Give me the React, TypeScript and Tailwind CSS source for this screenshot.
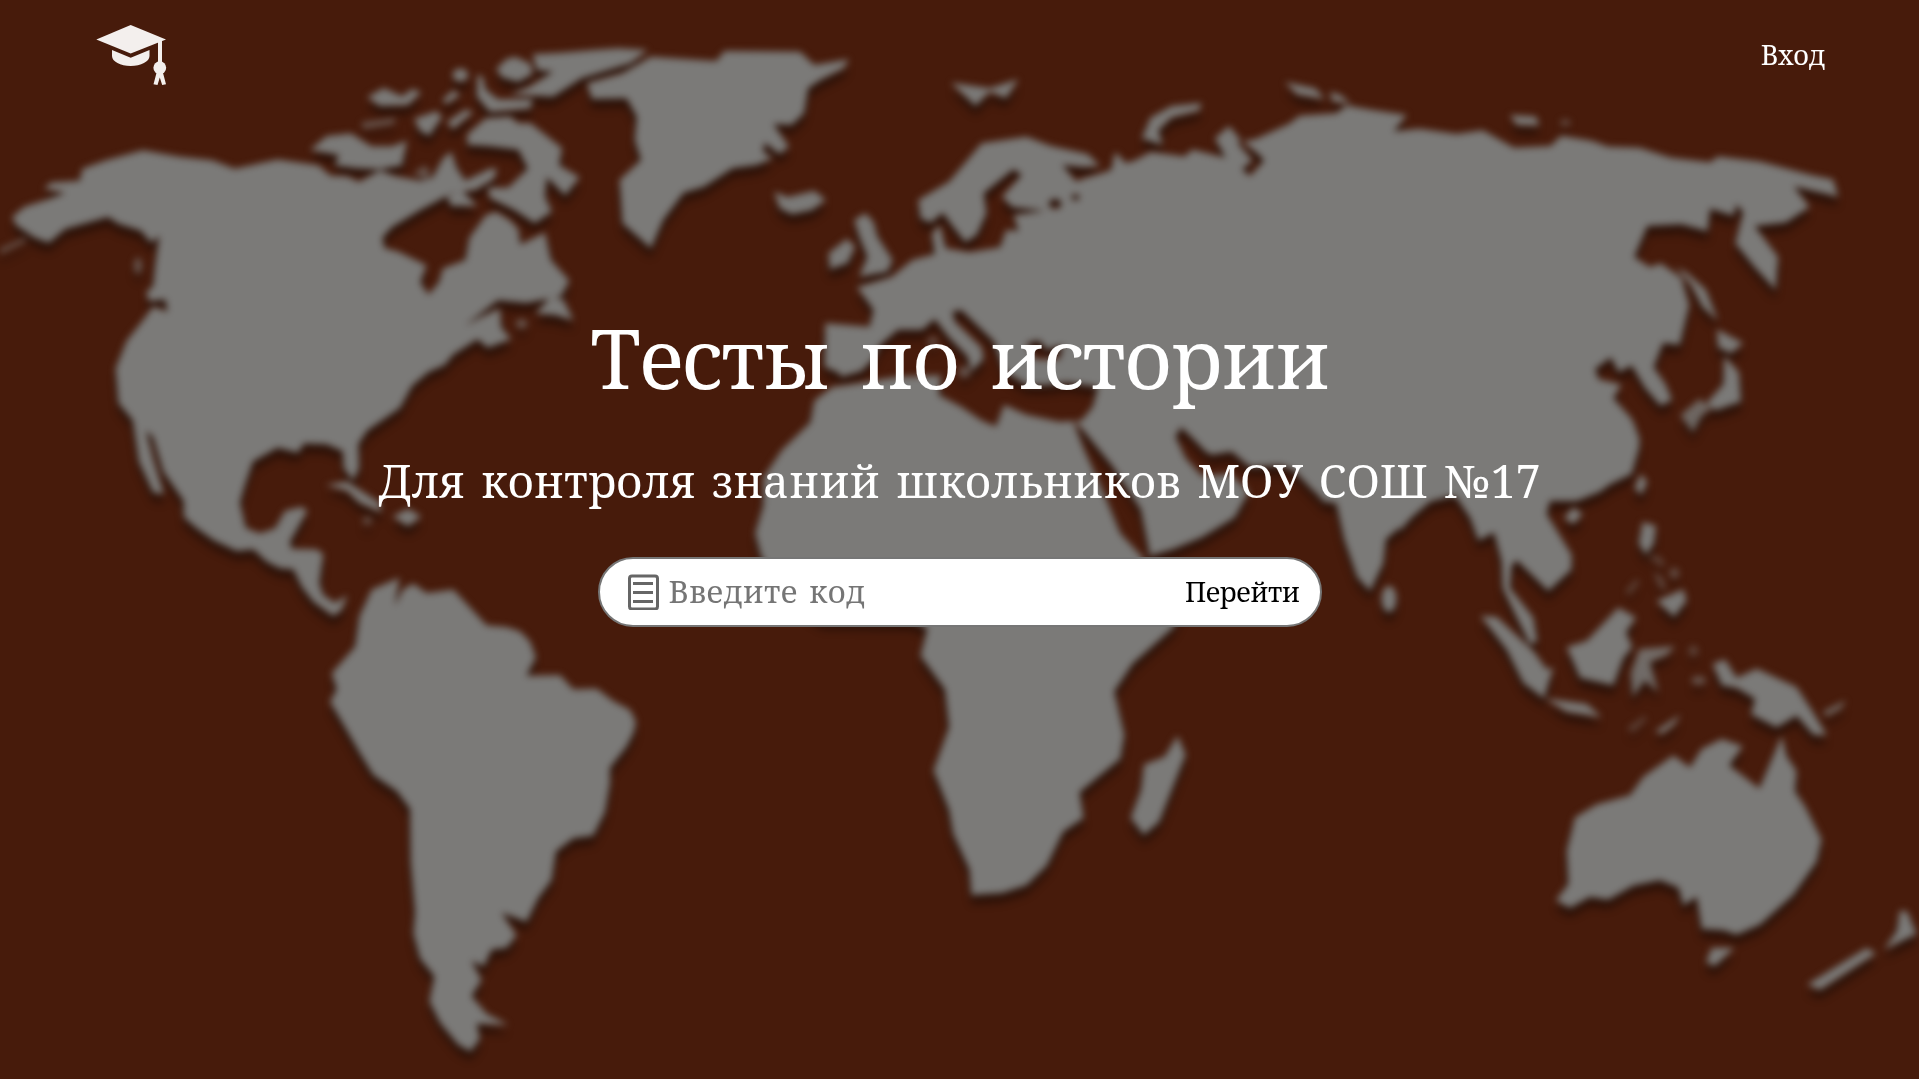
const crop = {
  northAmerica: "matrix(.40816 0 0 .34439 0 0)",
  atlantic: "matrix(.40816 0 0 .33333 500 0)",
  asia: "matrix(.52296 0 0 .34439 1080 40)",
  southAmerica: "matrix(.33333 0 0 .35651 300 520)",
  africa: "matrix(.40816 0 0 .39541 700 300)",
  oceania: "matrix(.33333 0 0 .3699 1400 440)",
  centralAmerica: "matrix(.33333 0 0 .33333 160 480)",
};

function WorldMap() {
  return (
    <svg
      className="absolute inset-0 h-full w-full"
      viewBox="0 0 1919 1079"
      preserveAspectRatio="none"
      aria-hidden="true"
    >
      <defs>
        <filter
          id="relief"
          filterUnits="userSpaceOnUse"
          x="-20"
          y="-20"
          width="1960"
          height="1120"
          colorInterpolationFilters="sRGB"
        >
          <feGaussianBlur in="SourceGraphic" stdDeviation="3.8" result="land" />
          <feOffset in="SourceAlpha" dx="0" dy="9" result="shifted" />
          <feGaussianBlur in="shifted" stdDeviation="5" result="soft" />
          <feComponentTransfer in="soft" result="shadow">
            <feFuncA type="linear" slope=".42" />
          </feComponentTransfer>
          <feFlood floodColor="#000" result="black" />
          <feComposite in="black" in2="shadow" operator="in" result="dark" />
          <feMerge>
            <feMergeNode in="dark" />
            <feMergeNode in="land" />
          </feMerge>
        </filter>
        <mask id="seas" maskUnits="userSpaceOnUse" x="0" y="0" width="1919" height="1079">
          <rect width="1919" height="1079" fill="#fff" />
          <g fill="#000">
            <g transform={crop.africa}>
              <path d="M270 188L300 190L345 195L395 180L425 150L440 115L485 75L545 75L575 48L610 95L655 142L665 180L695 150L690 120L625 55L618 30L640 25L720 105L745 180L800 215L850 215L900 208L975 220L962 270L935 305L880 308L800 290L745 265L725 320L690 305L640 270L585 240L590 190L480 195L380 212L325 220Z" />
              <path d="M800 110L830 102L850 125L890 115L880 150L820 150Z" />
              <path d="M912 300L935 325L1010 420L1080 530L1102 645L1085 652L1030 590L990 490L940 375Z" />
            </g>
            <path transform={crop.asia} d="M308 290L340 330L352 350L325 395L310 375L330 350L302 300Z" />
            <g transform={crop.atlantic}>
              <circle cx="1360" cy="612" r="15" />
              <circle cx="1410" cy="592" r="9" />
            </g>
          </g>
        </mask>
      </defs>
      <g filter="url(#relief)" fill="#7b7a78">
        <g transform={crop.northAmerica}>
          <path d="M30 630L60 600L120 578L160 560L108 548L125 530L195 525L202 490L260 465L350 436L440 455L520 465L575 490L680 463L780 480L810 510L850 512L880 528L930 495L970 512L1030 525L1060 515L1085 460L1105 440L1120 490L1140 525L1200 490L1218 490L1210 520L1165 552L1110 560L1030 610L960 660L937 690L942 720L975 730L1045 770L1030 820L1050 855L1075 820L1085 780L1140 755L1150 690L1190 625L1215 615L1250 640L1270 665L1275 710L1335 675L1350 755L1395 815L1375 860L1290 880L1220 872L1140 945L1180 920L1225 895L1228 950L1252 985L1195 1010L1170 985L1110 1030L1090 1060L1050 1080L1010 1120L980 1185L900 1250L878 1290L880 1360L865 1395L842 1360L840 1310L800 1290L745 1288L730 1315L680 1300L620 1340L600 1410L588 1460L600 1520L500 1540L450 1500L450 1455L400 1370L375 1270L358 1250L375 1330L402 1435L375 1430L340 1340L325 1220L290 1170L283 1070L310 990L350 930L375 890L410 905L405 870L365 875L358 850L375 830L380 770L390 685L370 705L345 670L290 650L265 630L160 665L120 705L85 690L40 655Z" />
          <path d="M0 722L60 690L66 700L0 738Z" opacity=".6" />
          <path d="M760 435L800 395L860 387L910 425L960 425L997 408L985 480L930 492L870 488L820 480L830 450Z" />
          <path d="M900 282L940 255L985 280L1010 258L1032 268L1000 305L930 308Z" />
          <path d="M885 355L970 342L965 360L890 375Z" opacity=".6" />
          <path d="M1015 345L1070 322L1083 340L1052 394L1028 380Z" />
          <path d="M1095 355L1140 318L1160 325L1110 375Z" />
          <path d="M1083 292L1110 262L1128 275L1095 302Z" />
          <circle cx="1128" cy="218" r="19" />
          <path d="M1170 215L1183 225L1190 260L1220 288L1305 288L1300 315L1200 325L1168 280Z" />
          <path d="M1216 200L1240 172L1262 165L1300 185L1305 215L1270 238L1230 225Z" />
          <path d="M1145 390L1190 343L1250 338L1270 358L1300 358L1377 430L1370 480L1420 515L1385 568L1340 515L1335 570L1352 615L1310 648L1260 610L1200 575L1195 545L1245 545L1293 490L1270 435L1200 425L1145 420Z" />
          <path d="M1095 570L1130 552L1170 598L1105 598Z" />
          <path d="M1012 505L1040 480L1055 500L1045 520Z" opacity=".6" />
          <path d="M1312 910L1350 862L1380 870L1405 930L1360 915Z" />
          <circle cx="1278" cy="940" r="14" opacity=".6" />
          <ellipse cx="338" cy="772" rx="10" ry="24" opacity=".6" />
          <path d="M798 1408L850 1398L930 1460L935 1488L880 1460L850 1425Z" />
          <path d="M962 1500L1000 1477L1032 1500L1000 1528Z" />
          <circle cx="900" cy="1512" r="12" opacity=".5" />
        </g>
        <path
          transform={crop.centralAmerica}
          d="M35 -30L75 60L75 115L110 145L160 180L230 213L280 208L320 245L360 265L400 268L425 320L460 365L520 408L545 390L562 345L525 368L490 345L478 310L490 222L470 208L395 206L390 185L410 150L442 92L425 80L375 92L345 145L300 160L260 145L240 105L232 60L250 -10Z"
        />
        <g transform={crop.atlantic}>
          <path d="M80 163L150 158L230 150L290 145L362 150L320 190L200 235L130 290L25 282L70 262L130 215L90 210Z" />
          <path d="M213 250L300 220L370 170L530 183L550 153L735 155L770 195L855 178L842 205L785 240L755 265L745 340L715 375L670 372L708 440L685 462L648 428L645 455L668 475L630 495L570 505L500 560L450 578L400 660L370 745L300 670L293 540L345 480L330 420L335 350L310 295L225 297Z" />
          <path d="M672 575L705 592L770 572L798 600L765 630L715 643L685 625Z" />
          <path d="M1105 248L1200 265L1270 238L1240 295L1200 275L1165 318Z" />
          <path d="M868 660L895 640L915 665L925 710L962 780L950 815L880 830L900 770L880 710Z" />
          <path d="M805 760L850 716L870 740L852 790L808 808Z" />
        </g>
        <g mask="url(#seas)">
          <g transform={crop.atlantic}>
            <path d="M1025 600L1100 545L1180 430L1290 410L1350 438L1440 462L1470 498L1430 502L1378 495L1410 542L1450 542L1498 508L1505 465L1530 490L1568 478L1568 1200L850 1200L832 1120L795 1100L797 970L905 980L915 930L875 862L960 830L1010 780L1065 762L1058 700L1078 675L1092 745L1150 757L1225 742L1240 690L1270 692L1258 645L1335 632L1255 622L1230 590L1278 525L1258 508L1185 580L1192 640L1168 705L1140 727L1110 680L1085 638L1055 668L1030 655Z" />
          </g>
          <g transform={crop.africa}>
            <path d="M330 215L280 255L270 310L200 380L155 450L155 520L135 590L150 650L220 760L300 810L520 812L557 830L540 900L600 985L610 1080L572 1190L610 1290L620 1350L660 1440L665 1505L740 1500L800 1480L850 1430L890 1345L940 1310L930 1245L1030 1160L1040 1100L1015 990L1060 920L1160 828L1220 700L1080 690L1085 652L1100 648L1160 630L1230 600L1310 550L1345 485L1300 440L1230 445L1190 400L1165 345L1180 320L1240 385L1300 380L1345 420L1440 415L1500 480L1530 507L1568 500L1568 -60L1000 -60L1000 180L700 200Z" />
          </g>
          <g transform={crop.asia}>
            <path d="M0 405L60 378L68 325L90 362L135 325L200 338L215 318L278 342L258 285L285 250L310 295L335 288L400 243L420 220L490 213L510 190L560 203L625 218L600 265L650 258L720 273L770 262L830 313L900 308L920 278L980 293L1010 310L1070 313L1130 342L1205 355L1220 338L1300 353L1400 393L1440 405L1450 455L1365 425L1395 485L1350 530L1290 540L1335 630L1330 725L1290 660L1253 590L1268 500L1255 478L1250 510L1205 490L1200 555L1150 535L1085 540L1060 630L1090 660L1110 648L1150 690L1165 770L1147 885L1115 880L1097 950L1120 1000L1132 1045L1110 1062L1080 1010L1055 945L1030 965L1015 922L985 955L992 985L1035 1000L1020 1040L1055 1100L1070 1180L1055 1260L1000 1300L900 1330L740 1330L710 1325L670 1340L585 1450L580 1520L555 1600L530 1560L505 1450L490 1345L465 1340L425 1262L385 1235L325 1240L290 1195L250 1205L190 1120L0 1000Z" />
          </g>
          <g transform={crop.oceania}>
            <path d="M0 -50L0 245L80 162L165 150L210 210L235 272L282 250L305 330L308 400L350 480L390 552L412 545L400 480L330 400L335 340L350 325L445 408L515 350L515 310L440 200L450 165L530 165L600 140L660 100L705 45L720 0L700 -50Z" />
          </g>
        </g>
        <g transform={crop.africa}>
          <circle cx="570" cy="105" r="13" opacity=".5" />
          <circle cx="648" cy="182" r="15" opacity=".6" />
          <path d="M1170 1102L1190 1150L1125 1320L1087 1353L1055 1310L1080 1240L1088 1175L1138 1155Z" />
        </g>
        <g transform={crop.asia}>
          <path d="M118 285L135 225L175 192L232 183L228 205L175 225L150 262L158 305Z" />
          <path d="M392 122L450 140L468 172L415 158Z" />
          <path d="M478 150L498 160L518 185L482 178Z" />
          <path d="M822 218L872 222L878 248L835 247Z" />
          <circle cx="928" cy="240" r="10" opacity=".5" />
          <path d="M1140 660L1160 675L1197 725L1220 815L1190 775L1168 710Z" />
          <path d="M1218 840L1268 880L1245 910L1220 892Z" />
          <path d="M1232 918L1260 965L1264 1050L1215 1075L1198 1055L1230 1000Z" />
          <path d="M1148 1090L1185 1042L1208 1070L1190 1090L1172 1140Z" opacity=".8" />
        </g>
        <ellipse cx="1389" cy="599" rx="7.500" ry="13" />
        <g transform={crop.oceania}>
          <path d="M492 210L520 182L548 200L520 228Z" />
          <path d="M703 130L722 92L742 112L725 148Z" />
          <path d="M728 222L768 232L762 280L738 310L716 280Z" />
          <path d="M740 320L770 310L795 330L785 345L760 325Z" opacity=".4" />
          <circle cx="823" cy="360" r="15" opacity=".5" />
          <path d="M760 355L785 370L800 405L780 400Z" opacity=".5" />
          <path d="M770 435L850 403L860 435L822 478Z" />
          <path d="M675 410L710 375L718 385L690 418Z" opacity=".4" />
          <path d="M500 560L560 543L655 453L708 480L678 520L697 560L670 590L640 663L540 643Z" />
          <path d="M242 475L290 478L400 570L440 620L460 615L445 660L432 698L370 657L320 567Z" />
          <path d="M435 698L560 713L605 750L500 735Z" />
          <path d="M698 695L692 630L718 565L825 558L800 582L750 600L775 682L735 650Z" opacity=".85" />
          <circle cx="880" cy="570" r="15" opacity=".4" />
          <ellipse cx="896" cy="650" rx="22" ry="12" opacity=".6" />
          <path d="M766 788L842 742L822 770L785 795Z" />
          <path d="M680 780L735 745L740 755L700 790Z" opacity=".4" />
          <path d="M938 605L975 593L1010 643L1070 618L1190 668L1235 730L1280 798L1240 797L1190 745L1130 777L1053 742L1065 700L1010 670L965 663Z" />
          <path d="M1268 735L1338 703L1322 727L1280 747Z" opacity=".8" />
          <path d="M468 1245L505 1200L500 1110L525 1020L590 985L690 960L730 910L820 853L870 885L905 835L965 808L1028 828L988 880L1078 942L1145 800L1160 855L1190 895L1185 950L1215 990L1265 1080L1250 1140L1180 1230L1080 1310L1010 1337L970 1325L905 1322L890 1235L850 1258L835 1210L780 1190L700 1205L625 1243L570 1235L510 1265Z" />
          <path d="M918 1412L935 1373L1003 1373L945 1422Z" />
          <path d="M1222 1472L1400 1373L1428 1388L1260 1487Z" />
          <path d="M1452 1378L1490 1328L1500 1272L1522 1275L1550 1335Z" />
        </g>
        <path
          transform={crop.southAmerica}
          d="M90 510L110 475L95 430L165 355L178 270L215 195L298 162L285 240L308 195L340 178L380 205L460 195L500 235L560 295L620 300L660 312L690 340L708 385L680 437L780 435L820 475L890 473L940 508L990 532L1008 565L1002 595L980 635L930 695L930 740L915 820L880 885L820 893L768 930L755 1010L715 1060L680 1127L605 1102L650 1165L620 1200L575 1205L552 1252L515 1237L545 1290L515 1335L560 1385L625 1416L530 1413L540 1455L512 1490L475 1472L420 1410L388 1350L403 1280L360 1230L340 1160L345 1100L332 960L330 810L290 760L220 715L180 655L140 590Z"
        />
      </g>
    </svg>
  );
}

function GraduationCap() {
  return (
    <svg className="h-[62px] w-[72px]" viewBox="0 0 72 62" fill="#f3efed" aria-hidden="true">
      <path d="M0.300 15.400L34.700 1L70 15.400L34.700 29.500Z" />
      <path d="M16 26L34.700 33.700L53.500 26V32C53.500 37.500 45 42 34.700 42S16 37.500 16 32Z" />
      <path d="M62 16H66V40H62Z" />
      <circle cx="63.800" cy="43.700" r="6.400" />
      <path d="M61 47L57.500 60.200L61.500 61L63.800 53.500L66.200 61L70 60.200L66.500 47Z" />
    </svg>
  );
}

function CodeIcon() {
  return (
    <svg className="h-9 w-[31px] shrink-0" viewBox="0 0 31 36" fill="none" stroke="#666" strokeWidth="3" aria-hidden="true">
      <rect x="1.500" y="2" width="28" height="33" rx="2.500" />
      <path d="M5 9.500H25M5 18.500H25M5 27.500H25" />
    </svg>
  );
}

export default function App() {
  return (
    <div className="relative h-screen w-full overflow-hidden bg-[#471b0b] font-['Noto_Serif','Liberation_Serif',serif] text-white">
      <WorldMap />
      <div className="relative flex h-full flex-col">
        <header className="flex h-[110px] items-center justify-between pr-[94px] pl-24">
          <a href="#">
            <GraduationCap />
          </a>
          <a href="#" className="text-[27px] leading-10 tracking-[-0.3px]">
            Вход
          </a>
        </header>
        <main className="flex flex-col items-center pt-[197px]">
          <h1 className="text-[82px] leading-[100px] tracking-[-1.4px] whitespace-nowrap [word-spacing:11px]">
            Тесты по истории
          </h1>
          <p className="mt-11 text-[45px] leading-[60px] whitespace-nowrap [word-spacing:4.5px]">
            Для контроля знаний школьников МОУ СОШ №17
          </p>
          <form className="mt-[46px] flex h-[70px] w-[724px] items-center rounded-[35px] border-2 border-[#767676] bg-white pr-5 pl-7">
            <CodeIcon />
            <input
              type="text"
              placeholder="Введите код"
              className="ml-2.5 h-full min-w-0 flex-1 bg-transparent pb-0.5 text-[31px] tracking-[0.3px] text-black outline-none [word-spacing:3px] placeholder:text-[#757575]"
            />
            <button type="button" className="text-[27px] tracking-[-0.5px] text-black">
              Перейти
            </button>
          </form>
        </main>
      </div>
    </div>
  );
}
